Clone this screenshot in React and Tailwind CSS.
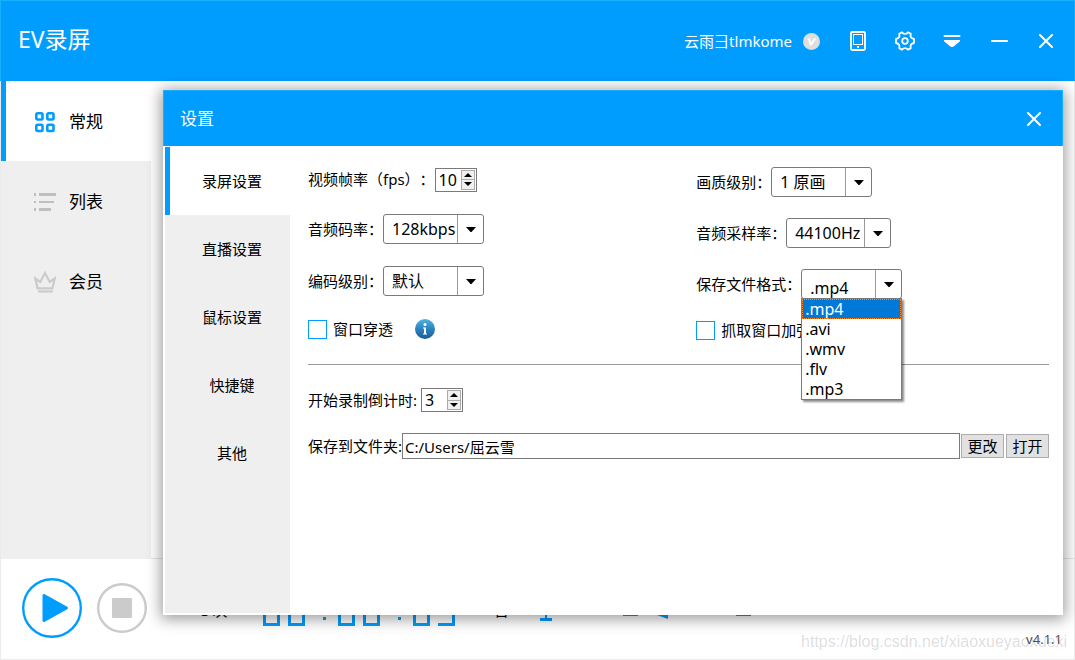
import React, { useState } from "react";

const fontStack = "font-['Noto_Sans','Noto_Sans_CJK_SC',sans-serif]";

const GridIcon = () => (
  <svg width="22" height="22" viewBox="0 0 22 22" fill="none" stroke="#009dff" strokeWidth="2.6">
    <rect x="2.3" y="2.3" width="6.2" height="6.2" rx="1.2" />
    <rect x="13.3" y="2.3" width="6.2" height="6.2" rx="1.2" />
    <rect x="2.3" y="13.8" width="6.2" height="6.2" rx="1.2" />
    <rect x="13.3" y="13.8" width="6.2" height="6.2" rx="1.2" />
  </svg>
);

const ListIcon = () => (
  <svg width="22" height="22" viewBox="0 0 22 22" fill="#bfbfbf">
    <path d="M0 2h2v3H0zM5 2h17v3H5zM0 10h2v2H0zM5 10h15v2H5zM0 17h2v3H0zM5 17h12v3H5z" />
  </svg>
);

const CrownIcon = () => (
  <svg width="22" height="22" viewBox="0 0 22 22" fill="none" stroke="#cbcbcb" strokeWidth="2.2">
    <path d="M1.300 7.500l5 3.500L11 2l4.700 9 5-3.500-2.300 9.800H3.600z" />
    <path d="M4 20.500h15" />
  </svg>
);

const PhoneIcon = () => (
  <svg width="16" height="20" viewBox="0 0 16 20" fill="none" stroke="white">
    <rect x="1" y="1" width="14" height="18" rx="1.2" strokeWidth="1.8" />
    <rect x="3.5" y="3.5" width="9" height="10" strokeWidth="1" />
    <rect x="7" y="15" width="2" height="2" fill="white" stroke="none" />
  </svg>
);

const GearIcon = () => (
  <svg width="20" height="20" viewBox="0 0 20 20" fill="none" stroke="white" strokeWidth="1.8" strokeLinejoin="round">
    <path d="M7 1.300 Q10 4.600 13 1.300 L15.800 2.900 Q14.500 7 19 8 V12 Q14.500 13 15.800 17.100 L13 18.700 Q10 15.400 7 18.700 L4.200 17.100 Q5.500 13 1 12 V8 Q5.500 7 4.200 2.900 Z" />
    <circle cx="10" cy="10" r="2.8" />
  </svg>
);

const MenuIcon = () => (
  <svg width="18" height="14" viewBox="0 0 18 14" fill="white">
    <rect x="0.5" y="1" width="17" height="2" rx="1" />
    <path d="M1 6h16v1.200L10 13H8L1 7.200z" />
  </svg>
);

const CloseIcon = () => (
  <svg width="16" height="16" viewBox="0 0 16 16" fill="none" stroke="white" strokeWidth="2" strokeLinecap="round">
    <path d="M2 2l12 12M14 2L2 14" />
  </svg>
);

const VipBadge = () => (
  <svg width="17" height="17" viewBox="0 0 17 17">
    <circle cx="8.5" cy="8.5" r="8.5" fill="#dedede" />
    <path d="M4.500 5.500h2.700l.8 4 2.800-4H13.500L8.500 12.500H7z" fill="white" />
  </svg>
);

const InfoIcon = () => (
  <svg width="20" height="20" viewBox="0 0 20 20">
    <defs>
      <linearGradient id="info" x1="0" y1="0" x2="0" y2="1">
        <stop offset="0" stopColor="#4fb4e2" />
        <stop offset="0.5" stopColor="#2b83bf" />
        <stop offset="1" stopColor="#1f5a94" />
      </linearGradient>
    </defs>
    <circle cx="10" cy="10" r="10" fill="url(#info)" />
    <circle cx="10" cy="5.5" r="1.5" fill="white" />
    <path d="M8 8.500h3v6h1V15.500H8v-1h1V9.500H8z" fill="white" />
  </svg>
);

const Caret = () => (
  <svg width="10" height="5" viewBox="0 0 10 5">
    <path d="M0 0h10L5.500 5h-1z" fill="black" />
  </svg>
);

const MicIcon = () => (
  <svg width="12" height="26" viewBox="0 0 12 26" fill="#009dff">
    <rect x="3" y="0" width="6" height="15" rx="3" />
    <path d="M0 12h2c0 8 8 8 8 0h2c0 5-2 7-5 8v3h5v3H0v-3h5v-3c-3-1-5-3-5-8z" />
  </svg>
);

const SpeakerIcon = () => (
  <svg width="18" height="22" viewBox="0 0 18 22" fill="#009dff">
    <path d="M0 5h7l11-5v22L7 18H0z" />
  </svg>
);

const LevelIcon = () => (
  <svg width="15" height="16" viewBox="0 0 15 16" fill="none" stroke="#009dff">
    <path d="M0 15.500h15M0 8h15" />
  </svg>
);

const mainNav = [
  { label: "常规", icon: <GridIcon /> },
  { label: "列表", icon: <ListIcon /> },
  { label: "会员", icon: <CrownIcon /> },
];

const tabs = ["录屏设置", "直播设置", "鼠标设置", "快捷键", "其他"];
const formats = [".mp4", ".avi", ".wmv", ".flv", ".mp3"];

const Spinner = ({ id, value, onChange }) => (
  <div className="flex h-6 w-[42px] border border-[#7a7a7a] bg-white p-px">
    <input
      id={id}
      type="text"
      inputMode="numeric"
      value={value}
      onChange={(e) => onChange(Number(e.target.value) || 0)}
      className="min-w-0 flex-1 pl-0.5 text-base leading-5 outline-none"
    />
    <div className="flex w-3.5 flex-col border border-[#acacac] bg-[#f0f0f0]">
      <button
        type="button"
        aria-label="+"
        onClick={() => onChange(value + 1)}
        className="flex flex-1 items-center justify-center border-b border-[#acacac]"
      >
        <svg width="8" height="4" viewBox="0 0 8 4">
          <path d="M4 0l4 4H0z" />
        </svg>
      </button>
      <button
        type="button"
        aria-label="-"
        onClick={() => onChange(Math.max(0, value - 1))}
        className="flex flex-1 items-center justify-center"
      >
        <svg width="8" height="4" viewBox="0 0 8 4">
          <path d="M0 0h8L4 4z" />
        </svg>
      </button>
    </div>
  </div>
);

const Dropdown = ({ id, options, width = "w-[101px]", value, onChange, open }) => (
  <div className={`relative flex h-[30px] ${width}`}>
    <select
      id={id}
      value={value}
      onChange={onChange}
      className={`h-full w-full appearance-none rounded-[3px] border border-[#7a7a7a] bg-white pl-2 text-base leading-7 outline-none ${
        open ? "pt-1" : ""
      }`}
    >
      {options.map((option) => (
        <option key={option}>{option}</option>
      ))}
    </select>
    <span className="pointer-events-none absolute inset-y-px right-px flex w-[26px] items-center justify-center border-l border-[#9a9a9a]">
      <Caret />
    </span>
  </div>
);

const CheckBox = ({ id, label }) => (
  <div className="flex items-center gap-[6px]">
    <input
      id={id}
      type="checkbox"
      className="size-[19px] appearance-none border border-[#009dff] bg-white checked:bg-[#009dff]"
    />
    <label htmlFor={id} className="whitespace-nowrap">
      {label}
    </label>
  </div>
);

// One seven segment digit, drawn as two stacked boxes
const Digit = ({ bottomLeft = true, middle = false }) => (
  <span className="flex w-[17px] flex-col">
    <span className={`h-[18px] border-x-3 border-t-3 border-[#009dff] ${middle ? "border-b-3" : ""}`} />
    <span className={`h-[18px] border-b-3 border-r-3 border-[#009dff] ${bottomLeft ? "border-l-3" : ""}`} />
  </span>
);

const Colon = () => (
  <span className="flex w-[17px] flex-col items-end justify-center gap-[18px] pr-1">
    <span className="size-[3px] bg-[#009dff]" />
    <span className="size-[3px] bg-[#009dff]" />
  </span>
);

const SettingsDialog = () => {
  const [tab, setTab] = useState(tabs[0]);
  const [fps, setFps] = useState(10);
  const [countdown, setCountdown] = useState(3);
  const [format, setFormat] = useState(".mp4");
  const [listOpen, setListOpen] = useState(true);
  const [folder, setFolder] = useState("C:/Users/屈云雪");

  const pickFormat = (item) => {
    setFormat(item);
    setListOpen(false);
  };

  return (
    <section
      role="dialog"
      aria-labelledby="settings-title"
      className="absolute top-[90px] right-3 bottom-[45px] left-[163px] flex flex-col bg-white shadow-[0_2px_14px_2px_rgba(0,0,0,0.4)]"
    >
      <header className="flex h-14 items-center justify-between border border-b-0 border-[#16b0ff] bg-[#009dff] pr-5 pl-4 text-white">
        <h2 id="settings-title" className="text-[17px]">
          设置
        </h2>
        <button type="button" aria-label="关闭">
          <CloseIcon />
        </button>
      </header>

      <div className="flex flex-1 px-0.5 pt-px pb-0.5">
        {/* Settings tabs */}
        <nav className="flex w-[125px] shrink-0 flex-col bg-[#efefef]">
          {tabs.map((item) => (
            <button
              key={item}
              type="button"
              onClick={() => setTab(item)}
              className={`h-[68px] border-l-5 pl-1 text-center ${
                item === tab ? "border-[#009dff] bg-white" : "border-transparent"
              }`}
            >
              {item}
            </button>
          ))}
        </nav>

        <form className="min-w-0 flex-1 pt-5 pr-3 pl-[18px]" onSubmit={(e) => e.preventDefault()}>
          <div className="grid grid-cols-[11fr_10fr]">
            <div className="flex flex-col gap-[22px]">
              <div className="flex h-[25px] items-center">
                <label htmlFor="fps" className="[text-spacing-trim:space-all]">
                  视频帧率（fps）：
                </label>
                <Spinner id="fps" value={fps} onChange={setFps} />
              </div>
              <div className="flex items-center">
                <label htmlFor="bitrate">音频码率：</label>
                <Dropdown id="bitrate" options={["128kbps"]} />
              </div>
              <div className="flex items-center">
                <label htmlFor="codec">编码级别：</label>
                <Dropdown id="codec" options={["默认"]} />
              </div>
              <div className="flex h-[22px] items-center gap-[22px]">
                <CheckBox id="through" label="窗口穿透" />
                <InfoIcon />
              </div>
            </div>

            <div className="flex flex-col gap-[21px]">
              <div className="flex items-center">
                <label htmlFor="quality">画质级别：</label>
                <Dropdown id="quality" options={["1 原画"]} />
              </div>
              <div className="flex items-center">
                <label htmlFor="sample">音频采样率：</label>
                <Dropdown id="sample" options={["44100Hz"]} width="w-[105px]" />
              </div>
              <div className="flex items-center">
                <label htmlFor="format">保存文件格式：</label>
                <div className="relative">
                  <Dropdown
                    id="format"
                    options={formats}
                    value={format}
                    onChange={(e) => setFormat(e.target.value)}
                    open={listOpen}
                  />
                  {listOpen && (
                    <ul
                      role="listbox"
                      className="absolute top-[29px] left-0 z-10 w-[101px] border border-[#7a7a7a] bg-white text-base leading-5 shadow-[2px_2px_2px_rgba(0,0,0,0.45)]"
                    >
                      {formats.map((item) => (
                        <li
                          key={item}
                          role="option"
                          aria-selected={item === format}
                          onClick={() => pickFormat(item)}
                          className={`h-5 px-[3px] ${
                            item === format
                              ? "bg-[#0078d7] text-white outline-1 -outline-offset-1 outline-dotted outline-[#ff8728]"
                              : ""
                          }`}
                        >
                          {item}
                        </li>
                      ))}
                    </ul>
                  )}
                </div>
              </div>
              <div className="flex h-5 items-center">
                <CheckBox id="enhance" label="抓取窗口加强" />
              </div>
            </div>
          </div>

          <hr className="mt-6 border-[#999999]" />

          <div className="mt-[23px] flex items-center gap-1">
            <label htmlFor="countdown">开始录制倒计时:</label>
            <Spinner id="countdown" value={countdown} onChange={setCountdown} />
          </div>

          <div className="mt-[21px] flex items-center">
            <label htmlFor="folder" className="whitespace-nowrap">
              保存到文件夹:
            </label>
            <input
              id="folder"
              type="text"
              value={folder}
              onChange={(e) => setFolder(e.target.value)}
              className="h-[26px] min-w-0 flex-1 border border-[#7a7a7a] px-0.5 outline-none"
            />
            <div className="ml-px flex gap-0.5">
              <button type="button" className="h-6 w-[43px] border border-[#adadad] bg-[#e1e1e1] leading-5">
                更改
              </button>
              <button type="button" className="h-6 w-[43px] border border-[#adadad] bg-[#e1e1e1] leading-5">
                打开
              </button>
            </div>
          </div>
        </form>
      </div>
    </section>
  );
};

const App = () => {
  const [page, setPage] = useState("常规");

  return (
    <div className={`relative flex min-h-screen flex-col bg-white text-[15px] text-black ${fontStack}`}>
      {/* Title bar */}
      <header className="flex h-[81px] items-center justify-between border border-b-0 border-[#16b0ff] bg-[#009dff] pr-[18px] pl-[17px] text-white">
        <h1 className="pb-1 text-[23px]">EV录屏</h1>
        <div className="flex items-center">
          <span>云雨彐tlmkome</span>
          <span className="ml-[11px]">
            <VipBadge />
          </span>
          <div className="ml-7 flex items-center gap-[27px]">
            <button type="button" aria-label="手机" className="flex w-5 justify-center">
              <PhoneIcon />
            </button>
            <button type="button" aria-label="设置" className="flex w-5 justify-center">
              <GearIcon />
            </button>
            <button type="button" aria-label="菜单" className="flex w-5 justify-center">
              <MenuIcon />
            </button>
            <button type="button" aria-label="最小化" className="flex w-5 justify-center">
              <svg width="17" height="2" viewBox="0 0 17 2">
                <rect width="17" height="2" rx="1" fill="white" />
              </svg>
            </button>
            <button type="button" aria-label="关闭" className="flex w-5 justify-center">
              <CloseIcon />
            </button>
          </div>
        </div>
      </header>

      <div className="flex flex-1 border-x border-[#ebebeb]">
        <nav className="flex w-[150px] flex-col bg-[#efefef]">
          {mainNav.map((item) => (
            <button
              key={item.label}
              type="button"
              onClick={() => setPage(item.label)}
              className={`flex h-20 items-center gap-[13px] border-l-5 pt-0.5 pl-7 text-[17px] ${
                item.label === page ? "border-[#009dff] bg-white" : "border-transparent"
              }`}
            >
              {item.icon}
              <span>{item.label}</span>
            </button>
          ))}
        </nav>
        <main className="flex-1 border-b border-[#e5e5e5]" />
      </div>

      {/* Recording controls */}
      <footer className="flex h-[101px] items-center border border-t-0 border-[#ebebeb] pr-3 pb-0.5 pl-[21px]">
        <button type="button" aria-label="开始">
          <svg width="60" height="60" viewBox="0 0 60 60">
            <circle cx="30" cy="30" r="28.800" fill="none" stroke="#009dff" strokeWidth="2.4" />
            <path d="M22 17.500v25L44.500 30z" fill="#009dff" stroke="#009dff" strokeWidth="3" strokeLinejoin="round" />
          </svg>
        </button>
        <button type="button" aria-label="停止" className="ml-[15px]">
          <svg width="50" height="50" viewBox="0 0 50 50">
            <circle cx="25" cy="25" r="23.800" fill="none" stroke="#cbcbcb" strokeWidth="2.4" />
            <rect x="15" y="15" width="20" height="20" rx="1" fill="#cbcbcb" />
          </svg>
        </button>
        <div className="ml-[54px] flex w-[62px] items-center gap-[3px] pt-1">
          <span>3</span>
          <span>次</span>
        </div>
        <div className="flex gap-2">
          <Digit />
          <Digit />
          <Colon />
          <Digit />
          <Digit />
          <Colon />
          <Digit />
          <Digit bottomLeft={false} middle />
        </div>
        <span className="ml-[39px] pt-1">台</span>
        <div className="ml-[31px] flex items-center">
          <MicIcon />
          <div className="ml-[71px] flex items-center gap-3">
            <LevelIcon />
            <SpeakerIcon />
          </div>
          <div className="ml-[68px]">
            <LevelIcon />
          </div>
        </div>
        <span className="flex-1" />
        <span className="self-end pb-2 text-[13px] text-[#555555]">v4.1.1</span>
      </footer>

      <SettingsDialog />

      <span className="pointer-events-none absolute right-2 bottom-1.5 font-['Liberation_Sans',sans-serif] text-base text-black/15">
        https://blog.csdn.net/xiaoxueyaoxuexi
      </span>
    </div>
  );
};

export default App;
